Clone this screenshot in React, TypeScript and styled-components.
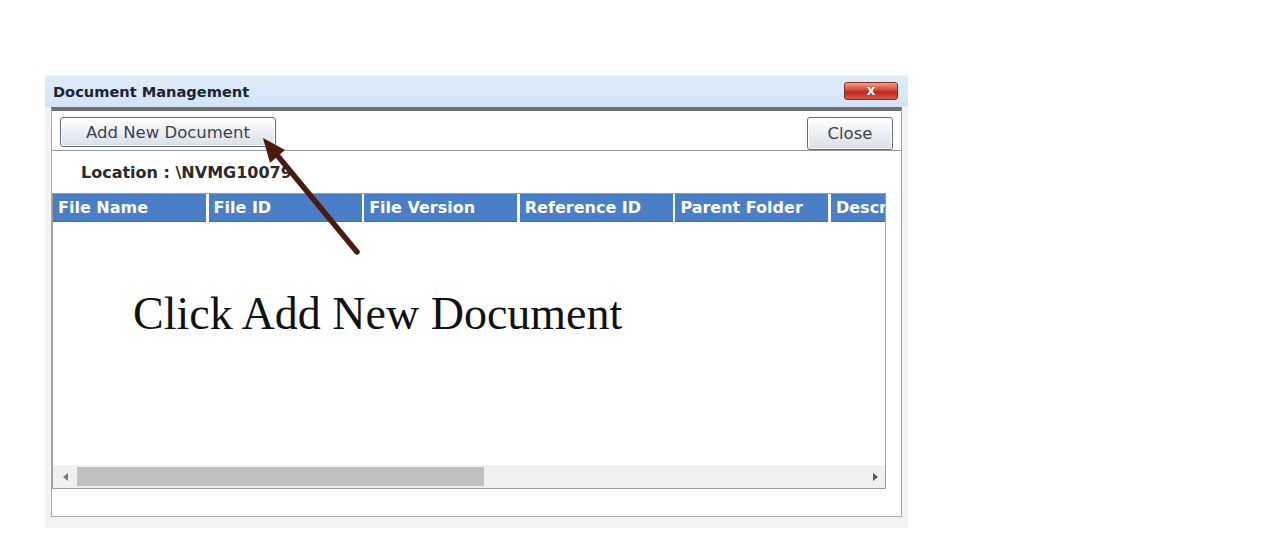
import React from 'react';
import styled, { createGlobalStyle } from 'styled-components';

const columns = ['File Name', 'File ID', 'File Version', 'Reference ID', 'Parent Folder', 'Description'];

const GlobalStyle = createGlobalStyle`
  html, body {
    margin: 0;
    padding: 0;
    background: #ffffff;
  }
`;

export default function App() {
  return (
    <Page>
      <GlobalStyle />
      <Window>
        <TitleBar>
          <TitleText>Document Management</TitleText>
          <CloseX aria-label="close">x</CloseX>
        </TitleBar>

        <Body>
          <Toolbar>
            <ToolButton $width={216}>Add New Document</ToolButton>
            <ToolButton $width={86} $tall>
              Close
            </ToolButton>
          </Toolbar>

          <LocationRow>Location : \NVMG10079</LocationRow>

          <Grid>
            <HeaderRow>
              {columns.map((c) => (
                <HeaderCell key={c}>{c}</HeaderCell>
              ))}
            </HeaderRow>
            <GridBody>
              <Caption>Click Add New Document</Caption>
            </GridBody>
            <ScrollBar>
              <ScrollArrow viewBox="0 0 6 8" width={6} height={8}>
                <path d="M5 0 L0 4 L5 8 Z" fill="#7a7a7a" />
              </ScrollArrow>
              <Track>
                <Thumb />
              </Track>
              <ScrollArrow viewBox="0 0 6 8" width={6} height={8}>
                <path d="M1 0 L6 4 L1 8 Z" fill="#555555" />
              </ScrollArrow>
            </ScrollBar>
          </Grid>

          <Footer />
        </Body>
      </Window>

      <Pointer width={1275} height={547} viewBox="0 0 1275 547">
        <line x1={357} y1={252} x2={277} y2={155} stroke="#4a1b10" strokeWidth={5.5} strokeLinecap="round" />
        <polygon points="263,138 285,150 270,163" fill="#4a1b10" />
      </Pointer>
    </Page>
  );
}

const Page = styled.div`
  position: relative;
  width: 1275px;
  height: 547px;
  padding: 75px 0 0 45px;
  box-sizing: border-box;
  font-family: 'DejaVu Sans', Verdana, sans-serif;
`;

const Window = styled.div`
  width: 863px;
  height: 453px;
  background: #f3f3f3;
  padding: 0 6px 11px 6px;
  box-sizing: border-box;
  display: flex;
  flex-direction: column;
`;

const TitleBar = styled.div`
  height: 32px;
  margin: 0 -6px;
  padding: 0 10px 0 8px;
  display: flex;
  align-items: center;
  justify-content: space-between;
  background: linear-gradient(#e0edfa, #d0e3f6);
  border-top: 1px solid #eef4fb;
  box-sizing: border-box;
`;

const TitleText = styled.span`
  font-size: 14.6px;
  font-weight: bold;
  color: #1c2433;
`;

const CloseX = styled.div`
  width: 54px;
  height: 18px;
  margin-top: -2px;
  border-radius: 3px;
  border: 1px solid #8a2a20;
  background: linear-gradient(#eba092, #d2483a 45%, #b8281c 55%, #d65a45);
  color: #ffffff;
  font-size: 14px;
  font-weight: bold;
  line-height: 15px;
  text-align: center;
  box-sizing: border-box;
  text-shadow: 0 0 1px #5a1008;
`;

const Body = styled.div`
  flex: 1;
  display: flex;
  flex-direction: column;
  background: #ffffff;
  border: 1px solid #a8a8a8;
  border-top: 4px solid #6f6f6f;
`;

const Toolbar = styled.div`
  height: 40px;
  padding: 6px 8px 0 8px;
  box-sizing: border-box;
  display: flex;
  align-items: flex-start;
  justify-content: space-between;
  border-bottom: 1px solid #9a9a9a;
`;

const ToolButton = styled.button<{ $width: number; $tall?: boolean }>`
  width: ${(p) => p.$width}px;
  height: ${(p) => (p.$tall ? 33 : 30)}px;
  padding: 0;
  border: 1px solid #5c6b82;
  border-radius: 3px;
  background: linear-gradient(#ffffff, #eceef3 50%, #dcdfe7);
  box-shadow: inset 0 0 0 1px #ffffff;
  font-family: 'DejaVu Sans', sans-serif;
  font-size: 16.5px;
  color: #3a4250;
  cursor: pointer;
`;

const LocationRow = styled.div`
  height: 42px;
  padding-left: 29px;
  display: flex;
  align-items: center;
  font-size: 16px;
  font-weight: bold;
  color: #2a2a2a;
`;

const Grid = styled.div`
  width: 834px;
  border: 1px solid #9c9c9c;
  box-sizing: border-box;
  overflow: hidden;
  display: flex;
  flex-direction: column;
`;

const HeaderRow = styled.div`
  display: flex;
  height: 28px;
  background: #ffffff;
`;

const HeaderCell = styled.div`
  flex: 0 0 153px;
  margin-right: 2.6px;
  padding-left: 5px;
  box-sizing: border-box;
  background: #4a7ec6;
  color: #ffffff;
  font-size: 16px;
  font-weight: bold;
  display: flex;
  align-items: center;
  white-space: nowrap;
  overflow: hidden;
  border-bottom: 1px solid #3f6fb3;
`;

const GridBody = styled.div`
  height: 243px;
  padding: 69px 0 0 80px;
  box-sizing: border-box;
`;

const Caption = styled.div`
  font-family: 'Liberation Serif', 'Times New Roman', serif;
  font-size: 46px;
  line-height: 46px;
  color: #111111;
  white-space: nowrap;
`;

const ScrollBar = styled.div`
  height: 23px;
  background: #f0f0f0;
  display: flex;
  align-items: center;
  padding: 0 7px 0 10px;
  gap: 8px;
`;

const ScrollArrow = styled.svg`
  flex: 0 0 auto;
`;

const Track = styled.div`
  flex: 1;
  height: 19px;
`;

const Thumb = styled.div`
  width: 407px;
  height: 100%;
  background: #c0c0c0;
`;

const Footer = styled.div`
  flex: 1;
`;

const Pointer = styled.svg`
  position: absolute;
  left: 0;
  top: 0;
  pointer-events: none;
`;
